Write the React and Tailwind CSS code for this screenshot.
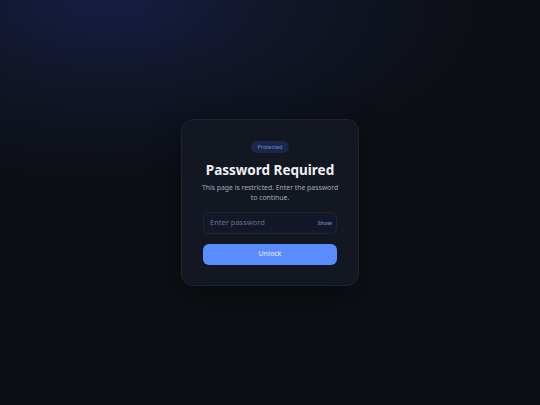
import React, { useState } from 'react';

const App = () => {
  const [show, setShow] = useState(false);
  const [value, setValue] = useState('');

  return (
    <div
      className="min-h-[405px] w-full flex items-center justify-center bg-[#0c0f14] bg-[radial-gradient(ellipse_70%_45%_at_20%_0%,#161d42_0%,#111629_45%,#0c0f14_100%)]"
      style={{ fontFamily: '"Noto Sans", "Open Sans", sans-serif' }}
    >
      <div className="w-[178px] rounded-[12px] border border-[#1e2432] bg-[#121722] px-[21px] pt-[21px] pb-[20px] flex flex-col items-center shadow-[0_10px_30px_rgba(0,0,0,0.35)]">
        <span className="rounded-full bg-[#1b2648] px-[6px] h-[12px] flex items-center text-[5.5px] text-[#6f8fdc]">
          Protected
        </span>
        <h1 className="mt-[7px] text-[13.5px] leading-[20px] font-bold text-[#eef1f7] whitespace-nowrap">
          Password Required
        </h1>
        <p className="mt-[3px] w-[138px] text-center text-[6.85px] leading-[9.5px] text-[#a3abbc]">
          This page is restricted. Enter the password to continue.
        </p>
        <div className="mt-[10px] w-full h-[22px] rounded-[6px] border border-[#1f2637] bg-[#131828] flex items-center pl-[6px] pr-[4px]">
          <input
            type={show ? 'text' : 'password'}
            value={value}
            onChange={e => setValue(e.target.value)}
            placeholder="Enter password"
            className="flex-1 min-w-0 bg-transparent outline-none text-[7.5px] text-[#d4d9e4] placeholder:text-[#6b7282]"
          />
          <button
            type="button"
            onClick={() => setShow(s => !s)}
            className="text-[5.5px] font-medium text-[#6f8fdc]"
          >
            {show ? 'Hide' : 'Show'}
          </button>
        </div>
        <button
          type="button"
          className="mt-[10px] w-full h-[21px] rounded-[6px] bg-[#5b8cff] text-[7px] text-[#dce6ff] font-medium"
        >
          Unlock
        </button>
      </div>
    </div>
  );
};

export default App;
